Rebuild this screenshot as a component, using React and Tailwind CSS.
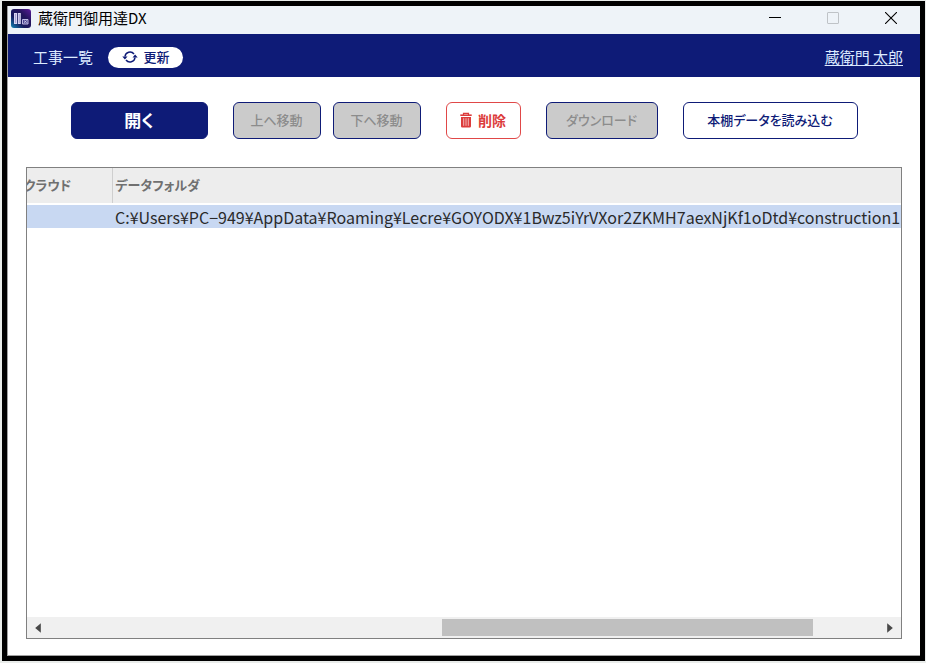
import React from "react";

function AppLogo() {
  return (
    <svg className="size-5 shrink-0" viewBox="0 0 20 20" aria-hidden="true">
      <defs>
        <linearGradient id="logo" x1="0" y1="1" x2="1" y2="0">
          <stop offset="0" stopColor="#1187b5" />
          <stop offset="0.35" stopColor="#171a5e" />
          <stop offset="0.65" stopColor="#24145c" />
          <stop offset="1" stopColor="#5b1c9c" />
        </linearGradient>
      </defs>
      <rect y="1" width="20" height="19" rx="3" fill="url(#logo)" />
      <path d="M3 5h3v11H3zM6.8 5h3v11h-3z" fill="#d9d5f2" />
      <path d="M4.5 6v9M8.3 6v9" stroke="#8a83bd" strokeWidth="0.6" />
      <path d="M11.5 11.5h5.5v4.5h-5.5z" fill="#4a4390" stroke="#cfcaf0" strokeWidth="0.9" />
      <path d="M13 14.8l2.8-2.4M13 12.6l2.8 2.2" stroke="#e2def7" strokeWidth="0.7" fill="none" />
    </svg>
  );
}

function TitleBar() {
  const control = "flex h-6 w-[58px] items-center justify-center";
  return (
    <header className="flex h-7 items-center bg-[#eef3f8] pb-1 pl-[3px] text-black">
      <AppLogo />
      <h1 className="ml-[7px] text-[15px] leading-5">蔵衛門御用達DX</h1>
      <div className="ml-auto flex">
        <button aria-label="最小化" className={control}>
          <svg width="12" height="12" viewBox="0 0 12 12"><path d="M0 5.5h12" stroke="#000" /></svg>
        </button>
        <button aria-label="最大化" disabled className={control}>
          <svg width="12" height="12" viewBox="0 0 12 12"><rect x="0.5" y="0.5" width="11" height="11" rx="0.5" fill="none" stroke="#bfc3c7" /></svg>
        </button>
        <button aria-label="閉じる" className={control}>
          <svg width="12" height="12" viewBox="0 0 12 12"><path d="M0 0l12 12M12 0L0 12" stroke="#000" strokeWidth="1.1" /></svg>
        </button>
      </div>
    </header>
  );
}

function RefreshIcon() {
  return (
    <svg width="16" height="14" viewBox="0 0 16 14" aria-hidden="true">
      <path d="M3 6.5A5 5 0 0 1 12 4M13 7.5A5 5 0 0 1 4 10" fill="none" stroke="#0e1b77" strokeWidth="1.5" />
      <path d="M0.3 6.4h5.2L2.9 9.4zM10.5 7.6h5.2L13.1 4.6z" fill="#0e1b77" />
    </svg>
  );
}

function TrashIcon() {
  return (
    <svg width="12" height="16" viewBox="0 0 12 16" aria-hidden="true">
      <path d="M3.5 3V1.3h5V3" fill="none" stroke="#dc3c3c" strokeWidth="1.2" />
      <path d="M0.3 3.2h11.4" stroke="#dc3c3c" strokeWidth="1.6" />
      <path d="M1 5h10v9.2a1.3 1.3 0 0 1-1.3 1.3H2.3A1.3 1.3 0 0 1 1 14.2z" fill="#dc3c3c" />
      <path d="M3.7 6.2v7.6M6 6.2v7.6M8.3 6.2v7.6" stroke="#f6c4c4" strokeWidth="0.9" />
    </svg>
  );
}

function NavBar() {
  return (
    <nav className="flex h-[43px] items-center bg-[#0e1b77] pt-[3px] pr-[17px] pl-[25px] text-[#dceaff]">
      <h2 className="text-[15px] leading-5">工事一覧</h2>
      <button className="ml-[15px] flex h-[21px] w-[75px] items-center justify-center gap-[6px] rounded-full bg-white text-[13px] leading-5 font-medium text-[#0e1b77]">
        <RefreshIcon />
        更新
      </button>
      <a href="#user" className="ml-auto text-[15px] leading-5 underline underline-offset-2">蔵衛門 太郎</a>
    </nav>
  );
}

function Toolbar() {
  const base = "flex h-[37px] items-center justify-center rounded-md border pb-[2px] leading-5";
  const muted = "border-[#0e1b77] bg-[#cbcbcb] text-[13px] font-medium text-[#8c8c8c]";
  return (
    <div className="flex justify-center gap-[25px] pt-[25px] pb-7">
      <button className={`${base} w-[137px] border-[#0e1b77] bg-[#0e1b77] text-[17px] font-bold text-white`}>開く</button>
      <div className="flex gap-3">
        <button disabled className={`${base} ${muted} w-[88px]`}>上へ移動</button>
        <button disabled className={`${base} ${muted} w-[88px]`}>下へ移動</button>
      </div>
      <button className={`${base} w-[75px] gap-[6px] border-[#e04848] bg-white text-[14px] font-bold text-[#dc3c3c]`}>
        <TrashIcon />
        削除
      </button>
      <button disabled className={`${base} ${muted} w-[112px]`}>ダウンロード</button>
      <button className={`${base} w-[175px] border-[#0e1b77] bg-white text-[13px] font-medium text-[#0e1b77]`}>本棚データを読み込む</button>
    </div>
  );
}

function ScrollBar() {
  return (
    <div className="flex h-[21px] items-center bg-[#f0f0f0] px-[6px]">
      <button aria-label="左へスクロール" className="flex size-4 shrink-0 items-center px-[2px]">
        <svg width="6" height="10" viewBox="0 0 6 10"><path d="M5.8 0.2v9.6L0.2 5z" fill="#484848" /></svg>
      </button>
      <div className="flex h-[17px] flex-1">
        <div className="w-[47.4%]" />
        <div className="w-[44.7%] bg-[#c0c0c0]" />
      </div>
      <button aria-label="右へスクロール" className="flex size-4 shrink-0 items-center justify-end px-[2px]">
        <svg width="6" height="10" viewBox="0 0 6 10"><path d="M0.2 0.2v9.6L5.8 5z" fill="#484848" /></svg>
      </button>
    </div>
  );
}

function ProjectTable() {
  return (
    <main className="mx-[18px] mb-4 flex flex-1 flex-col overflow-hidden border border-[#808080]">
      <div className="flex-1 overflow-hidden">
        <table className="w-full table-fixed border-collapse text-left">
          <thead className="bg-[#ededed] text-[13px] leading-5 text-[#707070]">
            <tr className="h-9 border-b border-[#cfcfcf]">
              <th className="w-[85px] border-r border-[#cfcfcf] p-0 pb-[2px] -indent-[3px] font-bold">クラウド</th>
              <th className="p-0 pb-[2px] pl-[3px] font-bold">データフォルダ</th>
            </tr>
          </thead>
          <tbody className="border-t-2 border-white text-[16px] leading-5 text-[#2a2a2a]">
            <tr className="h-6 bg-[#c8d8f2]">
              <td className="p-0" />
              <td className="p-0 pl-[3px] whitespace-nowrap">
                C:¥Users¥PC−949¥AppData¥Roaming¥Lecre¥GOYODX¥1Bwz5iYrVXor2ZKMH7aexNjKf1oDtd¥construction1
              </td>
            </tr>
          </tbody>
        </table>
      </div>
      <ScrollBar />
    </main>
  );
}

export default function App() {
  return (
    <div className="flex min-h-screen bg-[#e9ecea] pt-px pr-px pb-[2px] pl-[2px] font-['Noto_Sans_CJK_JP',sans-serif] [font-feature-settings:'palt']">
      <div className="flex flex-1 border-[5px] border-black">
        <div className="flex min-w-0 flex-1 flex-col border-b border-l border-[#a0a0a0] bg-white">
          <TitleBar />
          <NavBar />
          <Toolbar />
          <ProjectTable />
        </div>
      </div>
    </div>
  );
}
